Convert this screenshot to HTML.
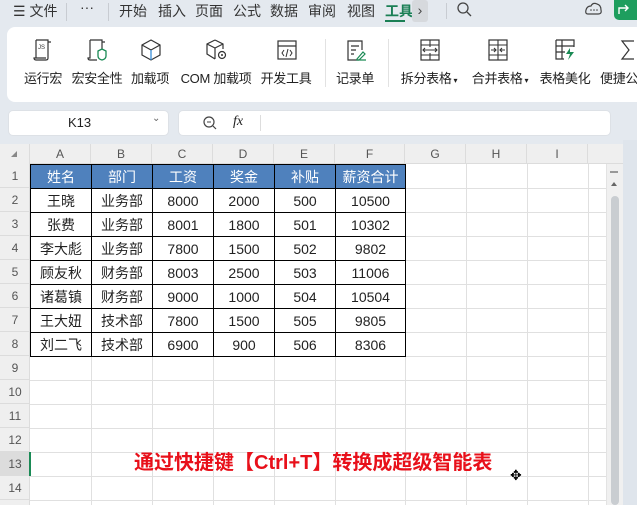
<!DOCTYPE html><html><head><meta charset="utf-8"><style>
*{margin:0;padding:0;box-sizing:border-box}
html,body{width:637px;height:505px;overflow:hidden}
body{background:#e4e9ef;font-family:"Liberation Sans","Noto Sans CJK SC",sans-serif;position:relative;color:#222}
.a{position:absolute;white-space:nowrap}
.t{font-size:14px;top:1px;color:#333}
.rl{font-size:13px;top:68px;transform:translateX(-50%);color:#222;letter-spacing:-0.3px}
.ic{position:absolute;top:39px}
.ch{position:absolute;top:144px;height:20px;font-size:12px;color:#555;text-align:center;line-height:20px;border-right:1px solid #dcdcdc}
.rh{position:absolute;left:0;width:30px;height:24px;font-size:12px;color:#555;text-align:center;line-height:24px;border-bottom:1px solid #dcdcdc}
table{position:absolute;left:30px;top:164px;border-collapse:collapse}
td{border:1px solid #000;height:24px;font-size:14px;text-align:center;padding:0;line-height:22px}
tr.h td{background:#4f81bd;color:#fff;border-color:#000}
</style></head><body>
<div class="a t" style="left:13px">☰ 文件</div>
<div class="a" style="left:66px;top:3px;width:1px;height:18px;background:#c8ccd2"></div>
<div class="a t" style="left:80px;top:-1px">···</div>
<div class="a" style="left:108px;top:3px;width:1px;height:18px;background:#c8ccd2"></div>
<div class="a t" style="left:119px">开始</div>
<div class="a t" style="left:158px">插入</div>
<div class="a t" style="left:195px">页面</div>
<div class="a t" style="left:233px">公式</div>
<div class="a t" style="left:270px">数据</div>
<div class="a t" style="left:308px">审阅</div>
<div class="a t" style="left:347px">视图</div>
<div class="a t" style="left:385px;color:#1a7f55;font-weight:bold">工具</div>
<div class="a" style="left:385px;top:20px;width:20px;height:2px;background:#1a7f55"></div>
<div class="a" style="left:412px;top:0;width:16px;height:22px;background:#d6d9dd;border-radius:3px;font-size:14px;text-align:center;line-height:20px;color:#444">›</div>
<div class="a" style="left:446px;top:3px;width:1px;height:16px;background:#c8ccd2"></div>
<svg class="a" style="left:456px;top:1px" width="18" height="18"><circle cx="7" cy="7" r="5" fill="none" stroke="#444" stroke-width="1.3"/><line x1="11" y1="11" x2="15" y2="15" stroke="#444" stroke-width="1.3"/></svg>
<svg class="a" style="left:585px;top:1px" width="18" height="16"><path d="M3 13 Q0 13 1 9 Q2 5 6 5 Q8 1 12 3 Q16 4 16 9 Q17 13 13 13Z" fill="none" stroke="#444" stroke-width="1.2"/><circle cx="6" cy="9" r=".8" fill="#444"/><circle cx="9" cy="9" r=".8" fill="#444"/><circle cx="12" cy="9" r=".8" fill="#444"/></svg>
<div class="a" style="left:614px;top:0;width:30px;height:20px;background:#1e9e5e;border-radius:0 0 0 5px"></div>
<svg class="a" style="left:617px;top:2px" width="16" height="14"><path d="M2 12 V6 H10 M8 3 L11 6 L8 9" fill="none" stroke="#fff" stroke-width="1.4"/></svg>
<div class="a" style="left:7px;top:27px;width:640px;height:75px;background:#fff;border-radius:8px"></div>
<svg class="ic" style="left:33px" width="20" height="22"><path d="M3 1 H15 V3 H18 M15 3 V19 Q15 21 13 21 H3 Q1 21 1 19 H13 M3 1 V19" fill="none" stroke="#333" stroke-width="1.2"/><text x="5" y="10" font-size="6" fill="#333" font-family="Liberation Sans">JS</text></svg>
<svg class="ic" style="left:87px" width="22" height="22"><path d="M3 1 H15 V3 H18 M15 3 V10 M3 1 V19 H1 Q1 21 3 21 H10 M3 1" fill="none" stroke="#333" stroke-width="1.2"/><path d="M11 12 L15 10 L19 12 V17 Q19 20 15 21 Q11 20 11 17Z" fill="none" stroke="#1a8a55" stroke-width="1.3"/></svg>
<svg class="ic" style="left:140px" width="22" height="22"><path d="M11 1 L20 6 V16 L11 21 L2 16 V6Z M2 6 L11 11 L20 6" fill="none" stroke="#333" stroke-width="1.2"/><path d="M11 11 V21" stroke="#3a8fd8" stroke-width="1.3"/></svg>
<svg class="ic" style="left:205px" width="22" height="22"><path d="M10 1 L18 5 V10 M10 1 L2 5 V15 L10 20 M2 5 L10 9 L18 5 M10 9 V20" fill="none" stroke="#333" stroke-width="1.2"/><circle cx="17" cy="16" r="3.5" fill="none" stroke="#333" stroke-width="1.2"/><circle cx="17" cy="16" r="1" fill="#333"/></svg>
<svg class="ic" style="left:276px" width="22" height="22"><rect x="2" y="2" width="18" height="18" fill="none" stroke="#333" stroke-width="1.2"/><line x1="2" y1="7" x2="20" y2="7" stroke="#333" stroke-width="1.2"/><path d="M8 11 L6 14 L8 17 M14 11 L16 14 L14 17 M12 10 L10 18" fill="none" stroke="#333" stroke-width="1"/></svg>
<div class="a" style="left:325px;top:39px;width:1px;height:48px;background:#e2e2e2"></div>
<svg class="ic" style="left:345px" width="22" height="22"><path d="M14 21 H3 V2 H17 V11" fill="none" stroke="#333" stroke-width="1.2"/><path d="M6 7 H14 M6 11 H11 M6 15 H9" stroke="#333" stroke-width="1.2"/><path d="M12 20 L18 13 L20 15 L14 21 H12Z M12 21 H21" fill="none" stroke="#1a8a55" stroke-width="1.2"/></svg>
<div class="a" style="left:388px;top:39px;width:1px;height:48px;background:#e2e2e2"></div>
<svg class="ic" style="left:419px" width="22" height="22"><rect x="2" y="1" width="18" height="20" fill="none" stroke="#333" stroke-width="1.2"/><path d="M11 1 V8 M11 14 V21 M2 6 H20 M2 16 H20 M4 11 H18 M6 9 L4 11 L6 13 M16 9 L18 11 L16 13" fill="none" stroke="#333" stroke-width="1.1"/></svg>
<svg class="ic" style="left:487px" width="22" height="22"><rect x="2" y="1" width="18" height="20" fill="none" stroke="#333" stroke-width="1.2"/><path d="M11 1 V21 M2 6 H20 M2 16 H20 M4 11 H9 M13 11 H18 M7 9 L9 11 L7 13 M15 9 L13 11 L15 13" fill="none" stroke="#333" stroke-width="1.1"/></svg>
<svg class="ic" style="left:554px" width="22" height="22"><path d="M2 1 H20 V8 M2 1 V20 H10 M2 7 H20 M2 13 H11 M8 1 V20" fill="none" stroke="#333" stroke-width="1.2"/><path d="M16 9 L12 15 H16 L14 21 L20 13 H16Z" fill="#1a8a55"/></svg>
<svg class="ic" style="left:620px" width="17" height="22"><path d="M14 2 H2 L9 11 L2 20 H14" fill="none" stroke="#333" stroke-width="1.2"/></svg>
<div class="a rl" style="left:43px">运行宏</div>
<div class="a rl" style="left:97px">宏安全性</div>
<div class="a rl" style="left:150px">加载项</div>
<div class="a rl" style="left:216px">COM 加载项</div>
<div class="a rl" style="left:286px">开发工具</div>
<div class="a rl" style="left:355px">记录单</div>
<div class="a rl" style="left:429px">拆分表格<span style="font-size:8px"> ▾</span></div>
<div class="a rl" style="left:500px">合并表格<span style="font-size:8px"> ▾</span></div>
<div class="a rl" style="left:565px">表格美化</div>
<div class="a rl" style="left:600px;transform:none">便捷公</div>
<div class="a" style="left:8px;top:110px;width:161px;height:26px;background:#fff;border-radius:5px;border:1px solid #dde1e6"></div>
<div class="a" style="left:68px;top:115px;font-size:13px">K13</div>
<div class="a" style="left:152px;top:113px;font-size:10px;color:#666">⌄</div>
<div class="a" style="left:178px;top:110px;width:433px;height:26px;background:#fff;border-radius:5px;border:1px solid #dde1e6"></div>
<svg class="a" style="left:202px;top:115px" width="16" height="16"><circle cx="7" cy="7" r="5" fill="none" stroke="#444" stroke-width="1.2"/><line x1="5" y1="7" x2="9" y2="7" stroke="#444"/><line x1="11" y1="11" x2="14" y2="14" stroke="#444" stroke-width="1.2"/></svg>
<div class="a" style="left:233px;top:114px;font-size:14px;font-style:italic;font-family:'Liberation Serif',serif">fx</div>
<div class="a" style="left:260px;top:115px;width:1px;height:16px;background:#ddd"></div>
<div class="a" style="left:0;top:144px;width:623px;height:361px;background:#fff"></div>
<div class="a" style="left:0;top:144px;width:623px;height:20px;background:#efefef;border-bottom:1px solid #dcdcdc"></div>
<div class="a" style="left:0;top:144px;width:30px;height:361px;background:#efefef;border-right:1px solid #dcdcdc"></div>
<div class="a" style="left:11px;top:151px;width:0;height:0;border-left:6px solid transparent;border-bottom:6px solid #888"></div>
<div class="ch" style="left:30px;width:61px">A</div><div class="ch" style="left:91px;width:61px">B</div><div class="ch" style="left:152px;width:61px">C</div><div class="ch" style="left:213px;width:61px">D</div><div class="ch" style="left:274px;width:61px">E</div><div class="ch" style="left:335px;width:70px">F</div><div class="ch" style="left:405px;width:61px">G</div><div class="ch" style="left:466px;width:61px">H</div><div class="ch" style="left:527px;width:61px">I</div>
<svg class="a" style="left:30px;top:164px" width="576" height="341">
<g stroke="#e0e0e0" stroke-width="1">
<line x1="0" y1="24.5" x2="576" y2="24.5"/><line x1="0" y1="48.5" x2="576" y2="48.5"/><line x1="0" y1="72.5" x2="576" y2="72.5"/><line x1="0" y1="96.5" x2="576" y2="96.5"/><line x1="0" y1="120.5" x2="576" y2="120.5"/><line x1="0" y1="144.5" x2="576" y2="144.5"/><line x1="0" y1="168.5" x2="576" y2="168.5"/><line x1="0" y1="192.5" x2="576" y2="192.5"/><line x1="0" y1="216.5" x2="576" y2="216.5"/><line x1="0" y1="240.5" x2="576" y2="240.5"/><line x1="0" y1="264.5" x2="576" y2="264.5"/><line x1="0" y1="288.5" x2="576" y2="288.5"/><line x1="0" y1="312.5" x2="576" y2="312.5"/><line x1="0" y1="336.5" x2="576" y2="336.5"/>
<line x1="61.5" y1="0" x2="61.5" y2="341"/><line x1="122.5" y1="0" x2="122.5" y2="341"/><line x1="183.5" y1="0" x2="183.5" y2="341"/><line x1="244.5" y1="0" x2="244.5" y2="341"/><line x1="305.5" y1="0" x2="305.5" y2="341"/><line x1="375.5" y1="0" x2="375.5" y2="341"/><line x1="436.5" y1="0" x2="436.5" y2="341"/><line x1="497.5" y1="0" x2="497.5" y2="341"/><line x1="558.5" y1="0" x2="558.5" y2="341"/>
</g></svg>
<div class="rh" style="top:164px">1</div><div class="rh" style="top:188px">2</div><div class="rh" style="top:212px">3</div><div class="rh" style="top:236px">4</div><div class="rh" style="top:260px">5</div><div class="rh" style="top:284px">6</div><div class="rh" style="top:308px">7</div><div class="rh" style="top:332px">8</div><div class="rh" style="top:356px">9</div><div class="rh" style="top:380px">10</div><div class="rh" style="top:404px">11</div><div class="rh" style="top:428px">12</div><div class="rh" style="top:452px;background:#dcdcdc">13</div><div class="rh" style="top:476px">14</div>
<div class="a" style="left:29px;top:452px;width:2px;height:24px;background:#1a8a55"></div>
<table>
<colgroup><col style="width:61px"><col style="width:61px"><col style="width:61px"><col style="width:61px"><col style="width:61px"><col style="width:70px"></colgroup>
<tr class="h"><td>姓名</td><td>部门</td><td>工资</td><td>奖金</td><td>补贴</td><td>薪资合计</td></tr>
<tr><td>王晓</td><td>业务部</td><td>8000</td><td>2000</td><td>500</td><td>10500</td></tr>
<tr><td>张费</td><td>业务部</td><td>8001</td><td>1800</td><td>501</td><td>10302</td></tr>
<tr><td>李大彪</td><td>业务部</td><td>7800</td><td>1500</td><td>502</td><td>9802</td></tr>
<tr><td>顾友秋</td><td>财务部</td><td>8003</td><td>2500</td><td>503</td><td>11006</td></tr>
<tr><td>诸葛镇</td><td>财务部</td><td>9000</td><td>1000</td><td>504</td><td>10504</td></tr>
<tr><td>王大妞</td><td>技术部</td><td>7800</td><td>1500</td><td>505</td><td>9805</td></tr>
<tr><td>刘二飞</td><td>技术部</td><td>6900</td><td>900</td><td>506</td><td>8306</td></tr>
</table>
<div class="a" style="left:134px;top:446px;font-size:20px;font-weight:bold;color:#e8101a">通过快捷键【Ctrl+T】转换成超级智能表</div>
<div class="a" style="left:510px;top:467px;font-size:14px;color:#000">✥</div>
<div class="a" style="left:606px;top:164px;width:17px;height:341px;background:#f0f0f0;border-left:1px solid #e3e3e3"></div>
<div class="a" style="left:610px;top:171px;width:8px;height:2px;background:#999"></div>
<div class="a" style="left:611px;top:182px;width:0;height:0;border-left:3px solid transparent;border-right:3px solid transparent;border-bottom:4px solid #666"></div>
<div class="a" style="left:611px;top:196px;width:8px;height:309px;background:#c9cdd1;border-radius:4px"></div>
<div class="a" style="left:623px;top:140px;width:14px;height:365px;background:#dfe5ec"></div>
</body></html>
